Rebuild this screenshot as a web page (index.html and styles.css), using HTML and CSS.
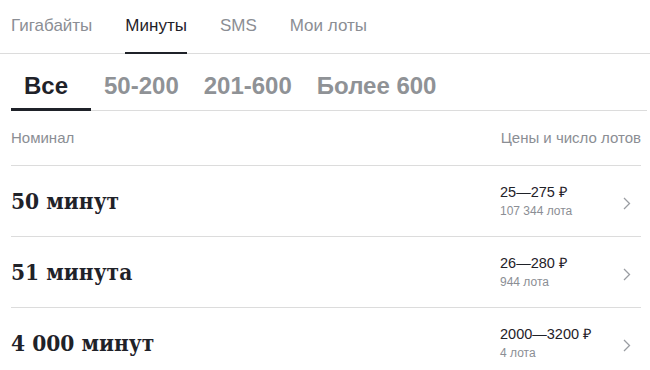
FILE: index.html
```html
<!DOCTYPE html>
<html lang="ru">
<head>
    <meta charset="UTF-8">
    <meta name="viewport" content="width=device-width, initial-scale=1.0">
    <title>Минуты</title>
    <link rel="stylesheet" href="styles.css">
</head>
<body>
    <nav class="tabs">
        <a class="tab">Гигабайты</a>
        <a class="tab active">Минуты</a>
        <a class="tab">SMS</a>
        <a class="tab">Мои лоты</a>
    </nav>

    <div class="filters">
        <button class="chip active">Все</button>
        <button class="chip">50-200</button>
        <button class="chip">201-600</button>
        <button class="chip">Более 600</button>
    </div>

    <main class="lots">
        <div class="lots-head">
            <span>Номинал</span>
            <span>Цены и число лотов</span>
        </div>

        <a class="lot">
            <span class="lot-title">50 минут</span>
            <span class="lot-price">
                <span class="price">25—275 ₽</span>
                <span class="count">107 344 лота</span>
            </span>
            <svg class="arrow" width="8" height="13" viewBox="0 0 8 13"><path d="M1 1l5.5 5.5L1 12" /></svg>
        </a>
        <a class="lot">
            <span class="lot-title">51 минута</span>
            <span class="lot-price">
                <span class="price">26—280 ₽</span>
                <span class="count">944 лота</span>
            </span>
            <svg class="arrow" width="8" height="13" viewBox="0 0 8 13"><path d="M1 1l5.5 5.5L1 12" /></svg>
        </a>
        <a class="lot">
            <span class="lot-title">4 000 минут</span>
            <span class="lot-price">
                <span class="price">2000—3200 ₽</span>
                <span class="count">4 лота</span>
            </span>
            <svg class="arrow" width="8" height="13" viewBox="0 0 8 13"><path d="M1 1l5.5 5.5L1 12" /></svg>
        </a>
    </main>
</body>
</html>
```

FILE: styles.css
```css
*{
    margin: 0;
    padding: 0;
    box-sizing: border-box;
}
body{
    background-color: #fff;
    color: #1f2229;
    font-family: "Liberation Sans", Arial, sans-serif;
    overflow: hidden;
}
.tabs{
    display: flex;
    gap: 33px;
    padding-left: 11px;
    border-bottom: 1px solid #dcdcdc;
}
.tab{
    font-size: 17px;
    line-height: 20px;
    padding: 16px 0;
    margin-bottom: -1px;
    color: #8b8e94;
    border-bottom: 2px solid transparent;
}
.tab.active{
    color: #1f2229;
    border-bottom-color: #1f2229;
}
.filters{
    display: flex;
    margin: 0 3px 0 11px;
    border-bottom: 1px solid #dcdcdc;
}
.chip{
    min-width: 80px;
    padding: 18px 12px 8px 13px;
    margin-bottom: -1px;
    text-align: left;
    font-family: "Liberation Sans", Arial, sans-serif;
    font-size: 24px;
    font-weight: bold;
    line-height: 28px;
    color: #8f9296;
    background: none;
    border: none;
    border-bottom: 3px solid transparent;
}
.chip.active{
    color: #1f2229;
    border-bottom-color: #1f2229;
}
.lots{
    margin: 0 9px 0 11px;
}
.lots-head{
    display: flex;
    justify-content: space-between;
    padding: 18px 0;
    font-size: 15px;
    line-height: 18px;
    color: #8b8e94;
    border-bottom: 1px solid #dcdcdc;
}
.lot{
    display: flex;
    align-items: center;
    height: 71px;
    padding-right: 10px;
    border-bottom: 1px solid #dcdcdc;
}
.lot-title{
    flex: 1;
    font-family: "DejaVu Serif", serif;
    font-stretch: condensed;
    font-size: 22.5px;
    font-weight: bold;
}
.lot-price{
    width: 123px;
    display: flex;
    flex-direction: column;
}
.price{
    font-size: 14.5px;
    line-height: 18px;
}
.count{
    margin-top: 1px;
    font-size: 12px;
    line-height: 18px;
    color: #8b8e94;
}
.arrow{
    margin-top: 4px;
}
.arrow path{
    fill: none;
    stroke: #9a9da2;
    stroke-width: 1.3;
}
```
